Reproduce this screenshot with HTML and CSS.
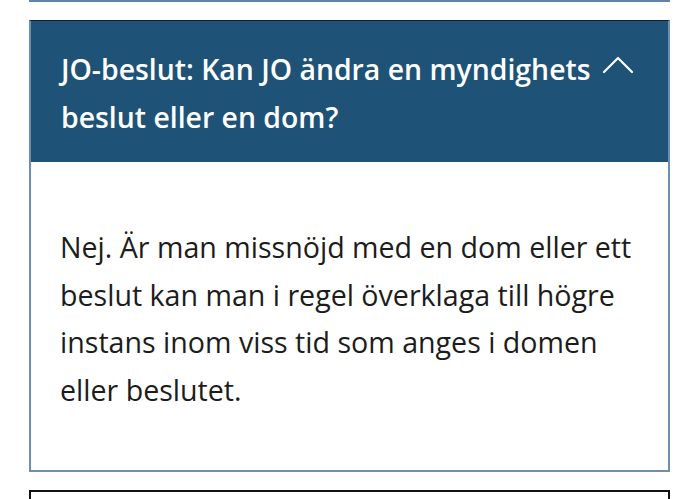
FILE: index.html
```html
<!DOCTYPE html>
<html lang="sv">
<head>
<meta charset="utf-8">
<title>JO-beslut</title>
<link rel="stylesheet" href="styles.css">
</head>
<body>
<div class="faq">
  <div class="faq-item faq-item--prev"></div>

  <section class="faq-item faq-item--open">
    <h2 class="faq-question">
      <span class="faq-question__text">JO-beslut: Kan JO ändra en myndighets beslut eller en dom?</span>
      <svg class="faq-chevron" viewBox="0 0 32 18" width="32" height="18" aria-hidden="true">
        <path d="M2 16 L16 2 L30 16" fill="none" stroke="#fff" stroke-width="2.2" stroke-linecap="round" stroke-linejoin="round"/>
      </svg>
    </h2>
    <div class="faq-answer">
      <p>Nej. Är man missnöjd med en dom eller ett beslut kan man i regel överklaga till högre instans inom viss tid som anges i domen eller beslutet.</p>
    </div>
  </section>

  <section class="faq-item faq-item--next"></section>
</div>
</body>
</html>
```
FILE: styles.css
```css
html, body {
  margin: 0;
  padding: 0;
  background: #ffffff;
}

body {
  font-family: "Open Sans", "Noto Sans", sans-serif;
  color: #1a1a1a;
  overflow: hidden;
}

.faq {
  display: flex;
  flex-direction: column;
  margin: 0 30px 0 29px;
}

.faq-item--prev {
  height: 0;
  border-bottom: 2px solid #5f84a6;
  margin-bottom: 18px;
}

.faq-item--open {
  border: 2px solid #6d90b1;
  border-top: 1px solid #0f2230;
}

.faq-question {
  display: flex;
  align-items: flex-start;
  gap: 8px;
  margin: 0;
  padding: 24px 30px 21px 30px;
  background: #1e5277;
  color: #ffffff;
  font-size: 28.4px;
  font-weight: 600;
  line-height: 48px;
}

.faq-question__text {
  flex: 1;
}

.faq-chevron {
  flex: none;
  margin-top: 11px;
  margin-right: 4px;
}

.faq-answer {
  padding: 61px 30px 57px 29px;
  background: #ffffff;
}

.faq-answer p {
  margin: 0;
  font-size: 28.6px;
  line-height: 47.5px;
  color: #1c1c1c;
}

.faq-item--next {
  margin-top: 18px;
  height: 40px;
  border: 2px solid #111111;
}
```
